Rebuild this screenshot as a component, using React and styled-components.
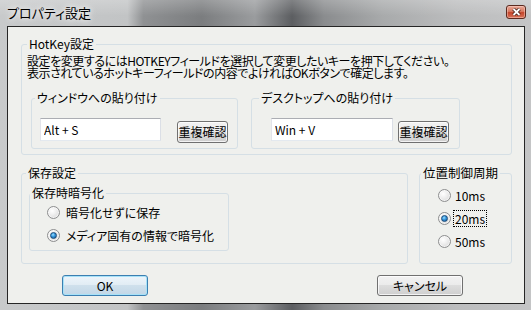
import React from "react";
import styled, { createGlobalStyle } from "styled-components";

const GlobalStyle = createGlobalStyle`
  html, body {
    margin: 0;
    padding: 0;
    background: #ffffff;
  }
  body {
    font-family: "Noto Sans CJK JP", "Noto Sans", sans-serif;
    font-size: 12px;
    font-feature-settings: "palt" 1;
    color: #000;
  }
`;

const Window = styled.div`
  width: 531px;
  height: 310px;
  box-sizing: border-box;
  padding: 0 6px 6px 7px;
  display: flex;
  flex-direction: column;
  background:
    linear-gradient(180deg, rgba(255, 255, 255, 0.22) 0px, rgba(255, 255, 255, 0) 16px),
    linear-gradient(
      90deg,
      #c8cacb 0%,
      #c2c4c5 24%,
      #8f9193 27%,
      #7b7d7f 38%,
      #9a9c9e 48%,
      #5c5e61 55%,
      #8a8c8e 61%,
      #a8aaab 72%,
      #bcbdbe 86%,
      #c4c5c6 100%
    );
`;

const TitleBar = styled.div`
  height: 26px;
  display: flex;
  align-items: flex-start;
  justify-content: space-between;
`;

const Title = styled.span`
  margin-top: 5px;
  font-size: 13px;
  line-height: 15px;
  text-shadow: 0 0 5px rgba(255, 255, 255, 0.95), 0 0 9px rgba(255, 255, 255, 0.8);
`;

const CloseButton = styled.div`
  width: 20px;
  height: 14px;
  margin-top: 5px;
  margin-right: -1px;
  box-sizing: border-box;
  border: 1px solid #5b2a1f;
  border-radius: 3px;
  background: linear-gradient(#eaa897, #d77a62 45%, #c4452b 55%, #d8745a);
  box-shadow: inset 0 0 0 1px rgba(255, 220, 210, 0.45);
  display: flex;
  align-items: center;
  justify-content: center;
`;

const Client = styled.div`
  flex: 1;
  border: 1px solid #262626;
  background: #eff0ed;
  padding: 11px 12px 0 13px;
  display: flex;
  flex-direction: column;
`;

const Group = styled.fieldset`
  margin: 0;
  min-width: 0;
  box-sizing: border-box;
  width: ${(p) => p.$w}px;
  border: 1px solid #d5dfe5;
  border-radius: 3px;
  padding: ${(p) => p.$top}px 0 ${(p) => p.$bottom}px 0;
`;

const Caption = styled.legend`
  padding: 0 2px;
  margin-left: ${(p) => p.$indent}px;
  font-size: ${(p) => p.$size || 12}px;
  line-height: 12px;
  white-space: nowrap;
`;

const GroupBody = styled.div`
  padding-left: ${(p) => p.$left}px;
`;

const Note = styled.p`
  margin: 0;
  line-height: 12px;
  letter-spacing: -0.45px;
  white-space: nowrap;
`;

const PasteRow = styled.div`
  display: flex;
  gap: 13px;
  margin: 13px 0 0 4px;
`;

const FieldLine = styled.div`
  display: flex;
  align-items: flex-start;
  gap: ${(p) => p.$gap}px;
`;

const KeyField = styled.input`
  width: ${(p) => p.$w}px;
  height: 23px;
  box-sizing: border-box;
  margin: 0;
  padding: 0 3px;
  border: 1px solid;
  border-color: #abadb3 #dbdfe6 #e3e9ef #e2e3ea;
  background: #fff;
  font: inherit;
  font-size: 12px;
  color: #000;
  outline: none;
`;

const PushButton = styled.button`
  box-sizing: border-box;
  width: ${(p) => p.$w}px;
  height: ${(p) => p.$h}px;
  margin: ${(p) => p.$top || 0}px 0 0;
  padding: 0;
  font: inherit;
  font-size: 12px;
  line-height: 12px;
  color: #000;
  border: 1px solid ${(p) => (p.$primary ? "#3c7fb1" : "#707070")};
  border-radius: 3px;
  background: ${(p) =>
    p.$primary
      ? "linear-gradient(#edf5fb 0%, #e1ecf4 49%, #cfe0ec 50%, #c2d7e7 100%)"
      : "linear-gradient(#f2f2f2 0%, #ebebeb 49%, #dddddd 50%, #cfcfcf 100%)"};
  box-shadow: inset 0 0 0 1px
    ${(p) => (p.$primary ? "#a7e2f8" : "rgba(255, 255, 255, 0.75)")};
`;

const Lower = styled.div`
  display: flex;
  gap: 11px;
  margin-top: 12px;
`;

const Choices = styled.div`
  display: flex;
  flex-direction: column;
  gap: 7px;
`;

const Choice = styled.div`
  height: 16px;
  display: flex;
  align-items: center;
  gap: ${(p) => p.$gap}px;
  line-height: 13px;
  white-space: nowrap;
`;

const RadioMark = styled.span`
  position: relative;
  flex: none;
  width: 13px;
  height: 13px;
  box-sizing: border-box;
  border-radius: 50%;
  border: 1px solid #8d8e8f;
  background: radial-gradient(circle at 38% 35%, #ffffff 0%, #f1f1f1 35%, #d2d2d2 100%);
  box-shadow: inset 0 0 0 1px rgba(255, 255, 255, 0.6);

  &::after {
    content: "";
    display: ${(p) => (p.$on ? "block" : "none")};
    position: absolute;
    inset: 2px;
    border-radius: 50%;
    border: 1px solid #1a4a78;
    background: radial-gradient(circle at 40% 35%, #9fe0ff 0%, #3a9be0 40%, #0f4f8c 100%);
  }
`;

const ChoiceText = styled.span`
  outline: ${(p) => (p.$focus ? "1px dotted #000" : "none")};
  outline-offset: 1px;
`;

const ButtonRow = styled.div`
  display: flex;
  justify-content: space-between;
  padding: 0 49px 0 41px;
  margin-top: 11px;
`;

const Radio = ({ on, focus, gap, children }) => (
  <Choice $gap={gap}>
    <RadioMark $on={on} />
    <ChoiceText $focus={focus}>{children}</ChoiceText>
  </Choice>
);

export default function App() {
  return (
    <>
      <GlobalStyle />
      <Window>
        <TitleBar>
          <Title>プロパティ設定</Title>
          <CloseButton>
            <svg width="9" height="8" viewBox="0 0 9 8">
              <path d="M1.5 1 L7.5 7 M7.5 1 L1.5 7" stroke="#3a1a12" strokeWidth="3.4" />
              <path d="M1.5 1 L7.5 7 M7.5 1 L1.5 7" stroke="#ffffff" strokeWidth="1.8" />
            </svg>
          </CloseButton>
        </TitleBar>
        <Client>
          <Group $w={491} $top={5} $bottom={5}>
            <Caption $indent={5}>HotKey設定</Caption>
            <GroupBody $left={5}>
              <Note>
                設定を変更するにはHOTKEYフィールドを選択して変更したいキーを押下してください。
                <br />
                表示されているホットキーフィールドの内容でよければOKボタンで確定します。
              </Note>
              <PasteRow>
                <Group $w={207} $top={14} $bottom={5}>
                  <Caption $indent={3}>ウィンドウへの貼り付け</Caption>
                  <GroupBody $left={8}>
                    <FieldLine $gap={16}>
                      <KeyField $w={121} defaultValue="Alt + S" readOnly />
                      <PushButton $w={51} $h={22} $top={3}>重複確認</PushButton>
                    </FieldLine>
                  </GroupBody>
                </Group>
                <Group $w={209} $top={14} $bottom={5}>
                  <Caption $indent={7}>デスクトップへの貼り付け</Caption>
                  <GroupBody $left={19}>
                    <FieldLine $gap={5}>
                      <KeyField $w={122} defaultValue="Win + V" readOnly />
                      <PushButton $w={51} $h={22} $top={3}>重複確認</PushButton>
                    </FieldLine>
                  </GroupBody>
                </Group>
              </PasteRow>
            </GroupBody>
          </Group>

          <Lower>
            <Group $w={387} $top={8} $bottom={12}>
              <Caption $indent={4}>保存設定</Caption>
              <GroupBody $left={7}>
                <Group $w={200} $top={5} $bottom={7}>
                  <Caption $indent={0}>保存時暗号化</Caption>
                  <GroupBody $left={17}>
                    <Choices>
                      <Radio gap={6}>暗号化せずに保存</Radio>
                      <Radio gap={6} on>
                        メディア固有の情報で暗号化
                      </Radio>
                    </Choices>
                  </GroupBody>
                </Group>
              </GroupBody>
            </Group>
            <Group $w={93} $top={8} $bottom={0}>
              <Caption $indent={1} $size={12.5}>位置制御周期</Caption>
              <GroupBody $left={18}>
                <Choices>
                  <Radio gap={4}>10ms</Radio>
                  <Radio gap={4} on focus>
                    20ms
                  </Radio>
                  <Radio gap={4}>50ms</Radio>
                </Choices>
              </GroupBody>
            </Group>
          </Lower>

          <ButtonRow>
            <PushButton $w={86} $h={21} $primary>
              OK
            </PushButton>
            <PushButton $w={86} $h={21}>
              キャンセル
            </PushButton>
          </ButtonRow>
        </Client>
      </Window>
    </>
  );
}
